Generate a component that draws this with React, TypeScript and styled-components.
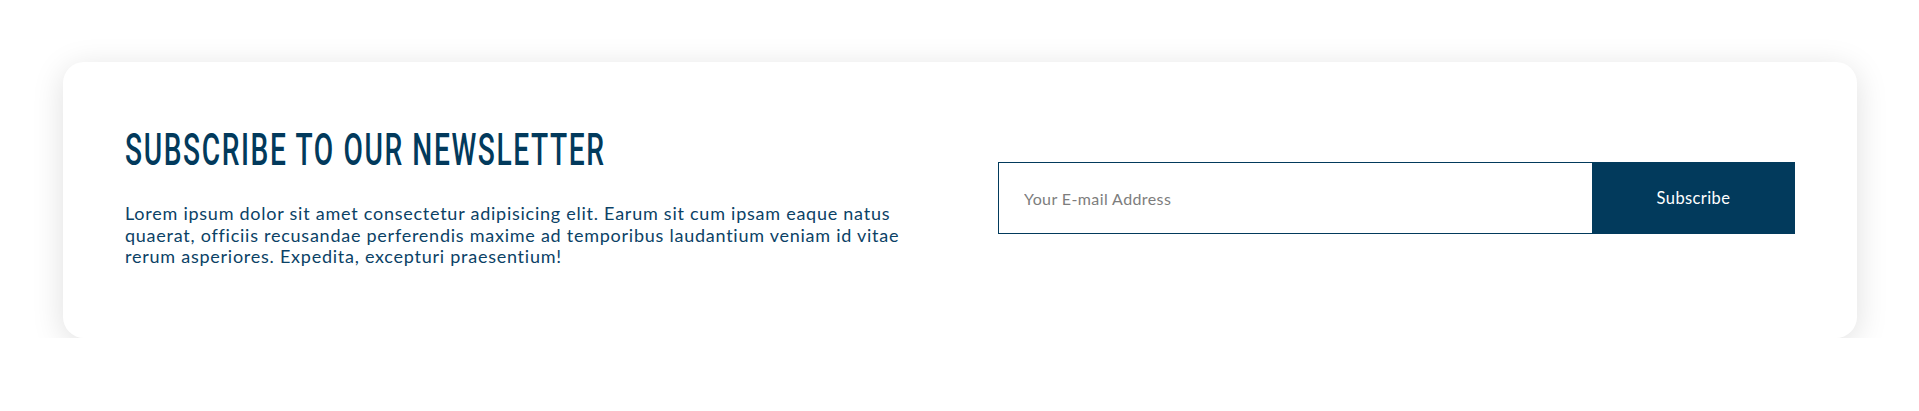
import * as React from 'react';
import styled, {createGlobalStyle} from "styled-components";

const GlobalStyle = createGlobalStyle`
  html, body {
    margin: 0;
    padding: 0;
    background: #fff;
  }
  * {
    box-sizing: border-box;
  }
`

const Page = styled.div`
  padding: 62px 62px 0 63px;
`

const Card = styled.section`
  display: grid;
  grid-template-columns: 1fr 1fr;
  column-gap: 76px;
  align-items: center;
  height: 276px;
  padding: 0 62px 4px;
  background: #fff;
  border-radius: 21px;
  box-shadow: 0 6px 32px rgba(0, 0, 0, 0.13);
`

const TextBlock = styled.div`
  display: flex;
  flex-direction: column;
  padding-top: 2px;
`

const Title = styled.h2`
  margin: 0 0 33px;
  font-family: Roboto, "Liberation Sans", sans-serif;
  font-weight: 500;
  font-size: 44px;
  line-height: 40px;
  letter-spacing: 2.5px;
  color: #023a5c;
  white-space: nowrap;
  transform: scaleX(0.64);
  transform-origin: left center;
`

const Text = styled.p`
  margin: 0;
  font-family: Lato, "Open Sans", sans-serif;
  font-weight: 400;
  font-size: 18px;
  line-height: 21.7px;
  letter-spacing: 0.75px;
  color: #0b4266;
`

const Form = styled.form`
  display: flex;
  height: 72px;
`

const EmailInput = styled.input`
  flex: 1;
  min-width: 0;
  height: 100%;
  padding: 0 25px;
  border: 1px solid #023a5c;
  border-right: none;
  outline: none;
  font-family: Lato, "Open Sans", sans-serif;
  font-weight: 400;
  font-size: 16px;
  letter-spacing: 0.4px;
  color: #333;

  &::placeholder {
    color: #7d7d7d;
  }
`

const SubscribeButton = styled.button`
  width: 203px;
  height: 100%;
  border: none;
  background: #023a5c;
  color: #fff;
  font-family: Lato, "Open Sans", sans-serif;
  font-size: 16.5px;
  letter-spacing: 0.4px;

  &:hover {
    cursor: pointer;
  }
`

export default function App() {
    return (
        <Page>
            <GlobalStyle/>
            <Card>
                <TextBlock>
                    <Title>SUBSCRIBE TO OUR NEWSLETTER</Title>
                    <Text>
                        Lorem ipsum dolor sit amet consectetur adipisicing elit. Earum sit cum ipsam eaque natus
                        quaerat, officiis recusandae perferendis maxime ad temporibus laudantium veniam id vitae
                        rerum asperiores. Expedita, excepturi praesentium!
                    </Text>
                </TextBlock>
                <Form onSubmit={e => e.preventDefault()}>
                    <EmailInput type="email" placeholder="Your E-mail Address"/>
                    <SubscribeButton type="submit">Subscribe</SubscribeButton>
                </Form>
            </Card>
        </Page>
    );
}
